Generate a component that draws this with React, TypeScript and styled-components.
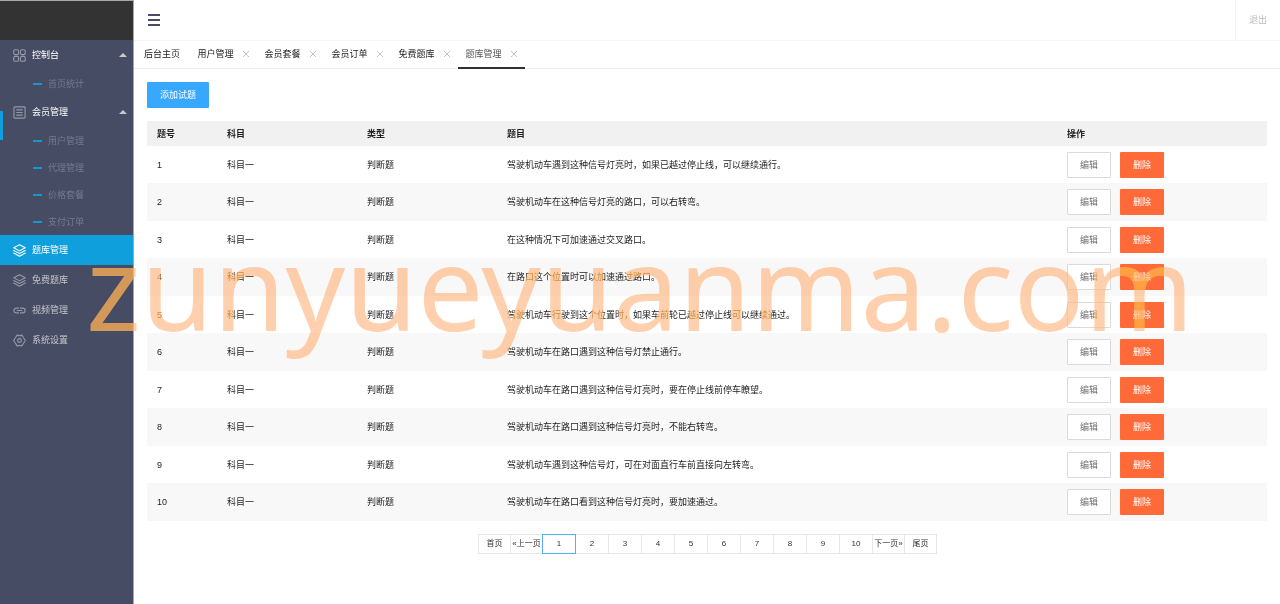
import React from "react";
import styled, { createGlobalStyle, css } from "styled-components";

const GlobalStyle = createGlobalStyle`
  *, *::before, *::after { box-sizing: border-box; }
  html { background: #fff; }
  body {
    margin: 0;
    color: #333;
    font: 9px/14px "Liberation Sans", "Noto Sans CJK SC", sans-serif;
  }
  button { font: inherit; cursor: pointer; }
  a { color: inherit; text-decoration: none; }
  ul { list-style: none; margin: 0; padding: 0; }
`;

const Shell = styled.div`
  position: relative;
  display: flex;
  min-height: 100vh;
  overflow: hidden;
`;

const Sidebar = styled.aside`
  flex: 0 0 134px;
  background: #464c63;
  border-right: 1px solid #a3a6b1;
`;

const Logo = styled.div`
  height: 40px;
  background: #333;
  border-top: 1px solid #a5a8a8;
`;

const MenuGroup = styled.li`
  position: relative;
`;

const MenuLink = styled.a<{ $tone?: "open" | "active" }>`
  display: flex;
  align-items: center;
  gap: 6px;
  height: 30px;
  padding: 0 6px 0 13px;
  color: #c5c6cb;
  ${(p) => p.$tone === "open" && css`color: #fff;`}
  ${(p) => p.$tone === "active" && css`color: #fff; background: #0f9fdc;`}
`;

const MenuIcon = styled.svg<{ $bright?: boolean }>`
  flex: none;
  width: 13px;
  height: 13px;
  fill: none;
  stroke: ${(p) => (p.$bright ? "#fff" : "#9499a8")};
  stroke-width: 1.2;
  stroke-linejoin: round;
  stroke-linecap: round;
`;

const Caret = styled.span`
  margin-left: auto;
  border: 4px solid transparent;
  border-top-width: 0;
  border-bottom-color: #c8c9ce;
`;

const SubLink = styled.a`
  display: flex;
  align-items: center;
  gap: 6px;
  height: 27px;
  padding-left: 33px;
  color: #737a94;
  &::before {
    content: "";
    width: 9px;
    height: 2px;
    background: #1397d1;
  }
`;

const HoverBar = styled.span`
  position: absolute;
  left: 0;
  top: 14px;
  width: 3px;
  height: 29px;
  background: #0f9fdc;
`;

const Main = styled.main`
  flex: 1;
  min-width: 0;
`;

const TopBar = styled.header`
  display: flex;
  align-items: stretch;
  justify-content: space-between;
  height: 41px;
  border-bottom: 1px solid #f5f5f5;
`;

const MenuToggle = styled.button`
  display: flex;
  flex-direction: column;
  justify-content: center;
  gap: 3px;
  padding: 0 14px;
  border: 0;
  background: none;
  span {
    width: 12px;
    height: 2px;
    background: #474d64;
  }
`;

const Logout = styled.a`
  display: flex;
  align-items: center;
  padding: 0 13px;
  border-left: 1px solid #f5f5f5;
  color: #bdbdbd;
`;

const Tabs = styled.nav`
  display: flex;
  height: 28px;
  border-bottom: 1px solid #efefef;
`;

const Tab = styled.div<{ $active?: boolean; $home?: boolean }>`
  display: flex;
  align-items: center;
  justify-content: center;
  gap: 8px;
  width: ${(p) => (p.$home ? 56 : 67)}px;
  height: 28px;
  color: ${(p) => (p.$active ? "#555" : "#222")};
  border-bottom: 2px solid ${(p) => (p.$active ? "#303136" : "transparent")};
`;

const CloseButton = styled.button`
  display: flex;
  padding: 0;
  border: 0;
  background: none;
  svg {
    width: 8px;
    height: 8px;
    stroke: #c4c4c4;
    fill: none;
  }
`;

const Content = styled.section`
  padding: 13px;
`;

const Button = styled.button<{ $kind: "primary" | "plain" | "danger" }>`
  height: 26px;
  padding: 0 12px;
  border: 1px solid transparent;
  border-radius: 1px;
  color: #fff;
  ${(p) => p.$kind === "primary" && css`background: #38a8fe;`}
  ${(p) => p.$kind === "danger" && css`background: #ff6a38;`}
  ${(p) => p.$kind === "plain" && css`background: #fff; border-color: #dadada; color: #707070;`}
`;

const Table = styled.table`
  width: 100%;
  margin-top: 13px;
  table-layout: fixed;
  border-collapse: collapse;
  color: #222;
  th, td {
    padding: 0 10px;
    text-align: left;
  }
  th {
    height: 25px;
    background: #f1f1f1;
    color: #222;
  }
  td { height: 37px; }
  tbody tr:nth-child(even) { background: #f8f8f8; }
  tbody tr:nth-child(even) td { height: 38px; }
`;

const Column = styled.col<{ $share: number }>`
  width: ${(p) => p.$share}%;
`;

const Actions = styled.div`
  display: flex;
  gap: 9px;
  ${Button} { width: 44px; padding: 0; }
`;

const Pager = styled.nav`
  display: flex;
  justify-content: center;
  margin-top: 13px;
  font-size: 8px;
`;

const PageLink = styled.a<{ $current?: boolean; $word?: boolean }>`
  position: relative;
  display: flex;
  align-items: center;
  justify-content: center;
  width: ${(p) => (p.$word ? 33 : 34)}px;
  height: 20px;
  margin-right: -1px;
  border: 1px solid ${(p) => (p.$current ? "#55b0f5" : "#e6e6e6")};
  z-index: ${(p) => (p.$current ? 1 : "auto")};
  white-space: nowrap;
`;

/* The screen pass lifts dark areas, the multiply pass then tints everything. */
const Watermark = styled.div`
  position: absolute;
  left: 86px;
  top: 228px;
  font: 117px/116px "Noto Sans", sans-serif;
  white-space: nowrap;
  pointer-events: none;
  span {
    color: #c39c37;
    mix-blend-mode: screen;
  }
  &::after {
    content: attr(data-text);
    position: absolute;
    left: 0;
    top: 0;
    color: #ffd0ad;
    mix-blend-mode: multiply;
  }
`;

const icons = {
  grid: (
    <>
      <rect x=".8" y=".8" width="5.2" height="5.2" rx="1.4" />
      <rect x="8" y=".8" width="5.2" height="5.2" rx="1.4" />
      <rect x=".8" y="8" width="5.2" height="5.2" rx="1.4" />
      <rect x="8" y="8" width="5.2" height="5.2" rx="1.4" />
    </>
  ),
  list: (
    <>
      <rect x="1" y="1" width="12" height="12" rx="1" />
      <path d="M4 4.2H10M4 7H10M4 9.8H10" />
    </>
  ),
  layers: (
    <>
      <path d="M7 .8 13.2 4.1 7 7.4 .8 4.1Z" />
      <path d="M.8 7 7 10.3 13.2 7M.8 9.8 7 13.1 13.2 9.8" />
    </>
  ),
  link: (
    <path d="M6 4.4H3.6A2.6 2.6 0 0 0 3.6 9.6H6M8 4.4H10.4A2.6 2.6 0 0 1 10.4 9.6H8M4.5 7H9.5" />
  ),
  gear: (
    <>
      <path d="M4.4 1.2Q7 2.2 9.6 1.2L11.2 3.8 13.3 7 11.2 10.2 9.6 12.8Q7 11.8 4.4 12.8L2.8 10.2.7 7 2.8 3.8Z" />
      <circle cx="7" cy="7" r="2" />
    </>
  ),
};

function Icon({ name, bright }: { name: keyof typeof icons; bright?: boolean }) {
  return (
    <MenuIcon viewBox="0 0 14 14" $bright={bright} aria-hidden="true">
      {icons[name]}
    </MenuIcon>
  );
}

type MenuItem = { label: string; icon: keyof typeof icons; children?: string[]; active?: boolean; marked?: boolean };

const menu: MenuItem[] = [
  { label: "控制台", icon: "grid", children: ["首页统计"] },
  { label: "会员管理", icon: "list", children: ["用户管理", "代理管理", "价格套餐", "支付订单"], marked: true },
  { label: "题库管理", icon: "layers", active: true },
  { label: "免费题库", icon: "layers" },
  { label: "视频管理", icon: "link" },
  { label: "系统设置", icon: "gear" },
];

const tabs = ["用户管理", "会员套餐", "会员订单", "免费题库", "题库管理"];

const questions = [
  "驾驶机动车遇到这种信号灯亮时，如果已越过停止线，可以继续通行。",
  "驾驶机动车在这种信号灯亮的路口，可以右转弯。",
  "在这种情况下可加速通过交叉路口。",
  "在路口这个位置时可以加速通过路口。",
  "驾驶机动车行驶到这个位置时，如果车前轮已越过停止线可以继续通过。",
  "驾驶机动车在路口遇到这种信号灯禁止通行。",
  "驾驶机动车在路口遇到这种信号灯亮时，要在停止线前停车瞭望。",
  "驾驶机动车在路口遇到这种信号灯亮时，不能右转弯。",
  "驾驶机动车遇到这种信号灯，可在对面直行车前直接向左转弯。",
  "驾驶机动车在路口看到这种信号灯亮时，要加速通过。",
];

const pages = ["首页", "«上一页", "1", "2", "3", "4", "5", "6", "7", "8", "9", "10", "下一页»", "尾页"];

export default function App() {
  return (
    <>
      <GlobalStyle />
      <Shell>
        <Sidebar>
          <Logo />
          <ul>
            {menu.map((item) => (
              <MenuGroup key={item.label}>
                <MenuLink href="#" $tone={item.active ? "active" : item.children ? "open" : undefined}>
                  <Icon name={item.icon} bright={item.active} />
                  {item.label}
                  {item.children && <Caret />}
                </MenuLink>
                {item.marked && <HoverBar />}
                {item.children && (
                  <ul>
                    {item.children.map((child) => (
                      <li key={child}>
                        <SubLink href="#">{child}</SubLink>
                      </li>
                    ))}
                  </ul>
                )}
              </MenuGroup>
            ))}
          </ul>
        </Sidebar>
        <Main>
          <TopBar>
            <MenuToggle aria-label="菜单">
              <span />
              <span />
              <span />
            </MenuToggle>
            <Logout href="#">退出</Logout>
          </TopBar>
          <Tabs>
            <Tab $home>
              <a href="#">后台主页</a>
            </Tab>
            {tabs.map((tab) => (
              <Tab key={tab} $active={tab === "题库管理"}>
                <a href="#">{tab}</a>
                <CloseButton aria-label={`关闭${tab}`}>
                  <svg viewBox="0 0 8 8">
                    <path d="M1 1 7 7M7 1 1 7" />
                  </svg>
                </CloseButton>
              </Tab>
            ))}
          </Tabs>
          <Content>
            <Button $kind="primary">添加试题</Button>
            <Table>
              <colgroup>
                <Column $share={6.25} />
                <Column $share={12.5} />
                <Column $share={12.5} />
                <Column $share={50} />
                <Column $share={18.75} />
              </colgroup>
              <thead>
                <tr>
                  <th>题号</th>
                  <th>科目</th>
                  <th>类型</th>
                  <th>题目</th>
                  <th>操作</th>
                </tr>
              </thead>
              <tbody>
                {questions.map((question, index) => (
                  <tr key={question}>
                    <td>{index + 1}</td>
                    <td>科目一</td>
                    <td>判断题</td>
                    <td>{question}</td>
                    <td>
                      <Actions>
                        <Button $kind="plain">编辑</Button>
                        <Button $kind="danger">删除</Button>
                      </Actions>
                    </td>
                  </tr>
                ))}
              </tbody>
            </Table>
            <Pager aria-label="分页">
              {pages.map((page) => (
                <PageLink key={page} href="#" $current={page === "1"} $word={page.includes("页")}>
                  {page}
                </PageLink>
              ))}
            </Pager>
          </Content>
        </Main>
        <Watermark data-text="zunyueyuanma.com">
          <span>zunyueyuanma.com</span>
        </Watermark>
      </Shell>
    </>
  );
}
